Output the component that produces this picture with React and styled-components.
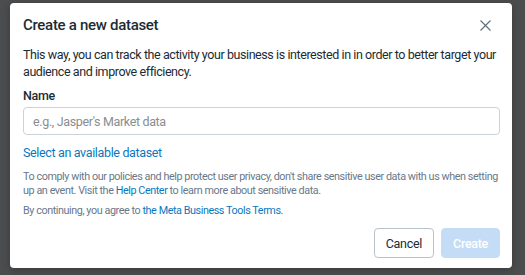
import React from "react";
import styled, { createGlobalStyle } from "styled-components";

const Global = createGlobalStyle`
  html, body { margin: 0; padding: 0; }
  body {
    width: 525px;
    height: 275px;
    overflow: hidden;
    background: #4c4d4f;
    font-family: Roboto, "Liberation Sans", Arial, sans-serif;
    -webkit-font-smoothing: antialiased;
  }
`;

const Backdrop = styled.div`
  width: 525px;
  height: 275px;
  box-sizing: border-box;
  padding: 3px 13px 0 10px;
`;

const Dialog = styled.div`
  width: 502px;
  height: 265px;
  box-sizing: border-box;
  background: #ffffff;
  border-radius: 4px;
  box-shadow: 0 2px 8px rgba(0, 0, 0, 0.25);
  padding: 10px 12px 10px 13px;
  display: flex;
  flex-direction: column;
`;

const Header = styled.div`
  display: flex;
  align-items: center;
  justify-content: space-between;
  height: 24px;
`;

const Title = styled.h2`
  margin: 0;
  font-size: 15px;
  font-weight: 500;
  color: #1c2b33;
  letter-spacing: -0.3px;
`;

const CloseButton = styled.button`
  border: none;
  background: none;
  padding: 0;
  width: 24px;
  height: 24px;
  display: flex;
  align-items: center;
  justify-content: center;
  margin-right: 3px;
  cursor: pointer;
`;

const Intro = styled.p`
  margin: 9px 0 0 0;
  font-size: 12.5px;
  letter-spacing: -0.42px;
  line-height: 17px;
  color: #1c2b33;
`;

const Label = styled.label`
  display: block;
  margin-top: 8px;
  font-size: 12.5px;
  letter-spacing: -0.3px;
  font-weight: 500;
  color: #1c2b33;
  line-height: 16px;
`;

const Input = styled.input`
  display: block;
  margin-top: 3px;
  width: 100%;
  height: 28px;
  box-sizing: border-box;
  border: 1px solid #cbd2d9;
  border-radius: 4px;
  padding: 0 9px;
  font-family: inherit;
  font-size: 12.5px;
  letter-spacing: -0.35px;
  color: #1c2b33;
  outline: none;
  &::placeholder { color: #8a8d91; }
`;

const Link = styled.a`
  color: #0a78be;
  text-decoration: none;
  cursor: pointer;
`;

const SelectLink = styled(Link)`
  display: block;
  margin-top: 10px;
  font-size: 12.5px;
  letter-spacing: -0.35px;
  line-height: 16px;
`;

const Fine = styled.p`
  margin: ${(p) => p.$mt}px 0 0 0;
  font-size: 10.8px;
  letter-spacing: -0.43px;
  line-height: 13.5px;
  color: #67788a;
`;

const Footer = styled.div`
  margin-top: auto;
  display: flex;
  justify-content: flex-end;
  gap: 7px;
`;

const Button = styled.button`
  height: 30px;
  box-sizing: border-box;
  border-radius: 4px;
  padding: 0 11px;
  font-family: inherit;
  font-size: 12.5px;
  letter-spacing: -0.3px;
  font-weight: ${(p) => (p.$primary ? 500 : 400)};
  border: 1px solid ${(p) => (p.$primary ? "#c4dcf5" : "#b9c2ca")};
  background: ${(p) => (p.$primary ? "#c4dcf5" : "#ffffff")};
  color: ${(p) => (p.$primary ? "#ffffff" : "#1c2b33")};
`;

export default function App() {
  return (
    <>
      <Global />
      <Backdrop>
        <Dialog>
          <Header>
            <Title>Create a new dataset</Title>
            <CloseButton aria-label="Close">
              <svg width="11" height="11" viewBox="0 0 11 11">
                <path d="M0.5 0.5 L10.5 10.5 M10.5 0.5 L0.5 10.5" stroke="#5d6c7b" strokeWidth="1.1" fill="none" />
              </svg>
            </CloseButton>
          </Header>
          <Intro>
            This way, you can track the activity your business is interested in in order to better target your
            audience and improve efficiency.
          </Intro>
          <Label>Name</Label>
          <Input placeholder="e.g., Jasper's Market data" />
          <SelectLink>Select an available dataset</SelectLink>
          <Fine $mt={9}>
            To comply with our policies and help protect user privacy, don't share sensitive user data with us when setting
            up an event. Visit the <Link>Help Center</Link> to learn more about sensitive data.
          </Fine>
          <Fine $mt={7}>
            By continuing, you agree to <Link>the Meta Business Tools Terms.</Link>
          </Fine>
          <Footer>
            <Button>Cancel</Button>
            <Button $primary>Create</Button>
          </Footer>
        </Dialog>
      </Backdrop>
    </>
  );
}
